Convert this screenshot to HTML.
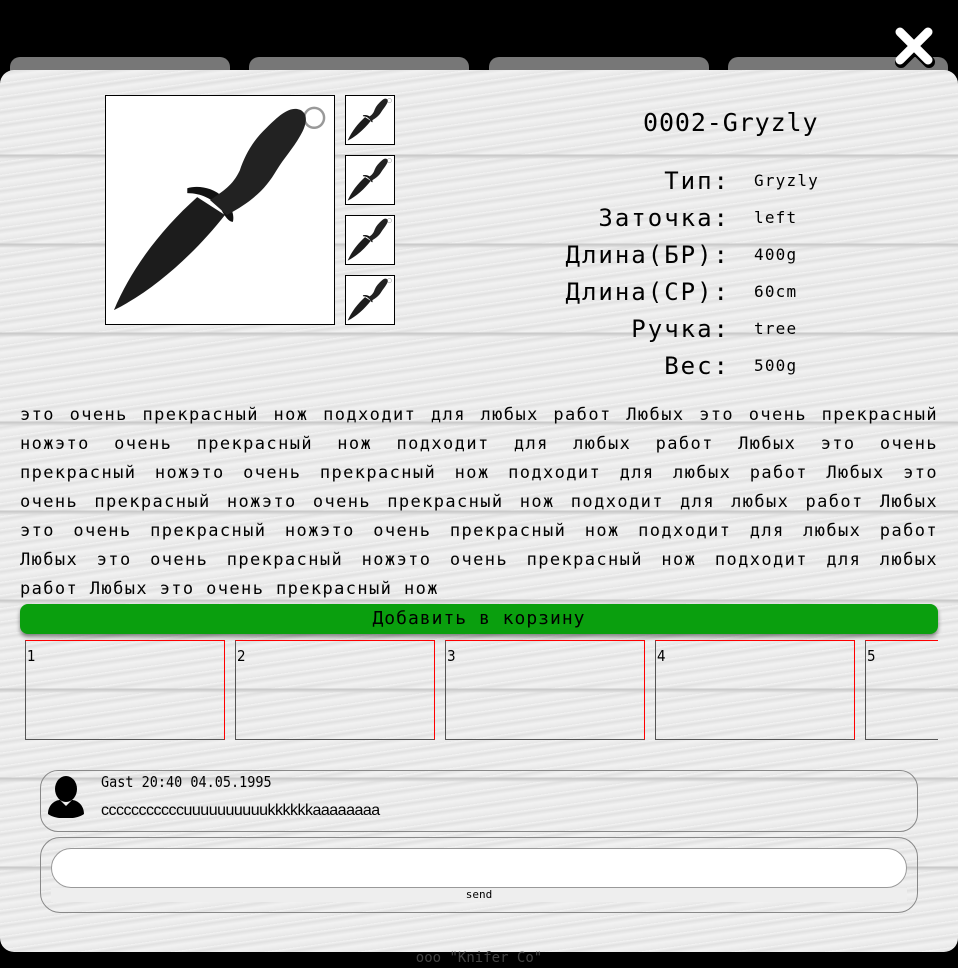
<!DOCTYPE html>
<html><head><meta charset="utf-8"><style>
*{box-sizing:border-box;margin:0;padding:0}
html,body{width:958px;height:968px;overflow:hidden;background:#000;font-family:"DejaVu Sans Mono","Liberation Mono",monospace;color:#000}
.tab{position:absolute;top:57px;height:30px;width:220px;background:#777;border-radius:10px}
.modal{position:absolute;left:0;top:70px;width:958px;height:882px;border-radius:14px;overflow:hidden;
background:#e9e9e9;
background-image:repeating-linear-gradient(180deg,transparent 0,transparent 84px,#c8c8c8 85px,#d6d6d6 87px,transparent 89px),
repeating-linear-gradient(172deg,rgba(255,255,255,.5) 0,rgba(200,200,200,.25) 3px,rgba(255,255,255,.4) 7px,rgba(225,225,225,.3) 13px)}
.close{position:absolute;left:890px;top:22px;width:48px;height:48px}
.main{position:absolute;left:105px;top:25px;width:230px;height:230px;background:#fff;border:1px solid #000}
.th{position:absolute;left:345px;width:50px;height:50px;background:#fff;border:1px solid #000}
.title{position:absolute;left:643px;top:38px;font-size:25px;letter-spacing:0.9px}
.specs{position:absolute;top:92px;left:400px;width:500px}
.row{height:37px;display:flex;align-items:center}
.lab{width:330px;text-align:right;font-size:24px;letter-spacing:2px}
.val{margin-left:24px;font-size:16px;letter-spacing:1.2px}
.desc{position:absolute;left:20px;top:331px;width:918px;font-size:17px;line-height:29px;text-align:justify;letter-spacing:1.4px}
.btn{position:absolute;left:20px;top:534px;width:918px;height:30px;background:#0a9f0e;border-radius:8px;text-align:center;font-size:18px;line-height:30px;box-shadow:0 3px 4px rgba(0,0,0,.45);letter-spacing:1px}
.scr{position:absolute;left:25px;top:570px;width:913px;height:100px;overflow:hidden}
.b{position:absolute;top:0;width:200px;height:100px;border:1px solid red;border-left-color:#555;border-bottom-color:#555;font-family:"DejaVu Sans Condensed","Liberation Sans Narrow",sans-serif;font-size:15px;padding-top:6px;padding-left:1px}
.com{position:absolute;left:40px;top:700px;width:878px;height:62px;border:1px solid #888;border-radius:18px}
.com .n{position:absolute;left:60px;top:2px;font-size:15px;font-family:"DejaVu Sans Mono",monospace;transform:scaleX(.9);transform-origin:left}
.com .m{position:absolute;left:60px;top:31px;font-size:16px;font-family:"Liberation Sans",sans-serif;letter-spacing:-.5px}
.frm{position:absolute;left:40px;top:767px;width:878px;height:76px;border:1px solid #888;border-radius:20px}
.ta{position:absolute;left:10px;top:10px;width:856px;height:40px;background:#fff;border:1px solid #999;border-radius:20px}
.send{position:absolute;left:10px;top:50px;width:856px;height:14px;background:#eee;font-size:11px;text-align:center;line-height:14px}
.foot{position:absolute;top:950px;left:0;width:958px;text-align:center;color:#444;font-size:14px}
</style></head><body>
<div class="tab" style="left:10px"></div><div class="tab" style="left:249px"></div><div class="tab" style="left:489px"></div><div class="tab" style="left:728px"></div>
<div class="modal">
<div class="main"><svg width="228" height="228" viewBox="0 0 230 230" id="k">
<circle cx="210" cy="22" r="10" fill="none" stroke="#999" stroke-width="2.5"/>
<path d="M8 216 C25 175 55 135 92 102 L120 120 C90 158 50 195 8 216Z" fill="#1c1c1c"/>
<path d="M82 93 C92 90 108 92 118 102 C126 110 130 120 128 127 C124 127 120 122 116 114 C108 104 96 98 82 98Z" fill="#111"/>
<path d="M105 105 C118 96 128 90 135 75 C140 60 148 45 162 32 C176 18 186 10 196 14 C204 18 203 28 196 40 C188 54 180 62 172 75 C162 92 150 105 122 120Z" fill="#222"/>
</svg></div>
<div class="th" style="top:25px"><svg width="48" height="48" viewBox="0 0 230 230"><use href="#k"/></svg></div>
<div class="th" style="top:85px"><svg width="48" height="48" viewBox="0 0 230 230"><use href="#k"/></svg></div>
<div class="th" style="top:145px"><svg width="48" height="48" viewBox="0 0 230 230"><use href="#k"/></svg></div>
<div class="th" style="top:205px"><svg width="48" height="48" viewBox="0 0 230 230"><use href="#k"/></svg></div>
<div class="title">0002-Gryzly</div>
<div class="specs">
<div class="row"><div class="lab">Тип:</div><div class="val">Gryzly</div></div>
<div class="row"><div class="lab">Заточка:</div><div class="val">left</div></div>
<div class="row"><div class="lab">Длина(БР):</div><div class="val">400g</div></div>
<div class="row"><div class="lab">Длина(СР):</div><div class="val">60cm</div></div>
<div class="row"><div class="lab">Ручка:</div><div class="val">tree</div></div>
<div class="row"><div class="lab">Вес:</div><div class="val">500g</div></div>
</div>
<div class="desc">это очень прекрасный нож подходит для любых работ Любых это очень прекрасный ножэто очень прекрасный нож подходит для любых работ Любых это очень прекрасный ножэто очень прекрасный нож подходит для любых работ Любых это очень прекрасный ножэто очень прекрасный нож подходит для любых работ Любых это очень прекрасный ножэто очень прекрасный нож подходит для любых работ Любых это очень прекрасный ножэто очень прекрасный нож подходит для любых работ Любых это очень прекрасный нож</div>
<div class="btn">Добавить в корзину</div>
<div class="scr">
<div class="b" style="left:0">1</div><div class="b" style="left:210px">2</div><div class="b" style="left:420px">3</div><div class="b" style="left:630px">4</div><div class="b" style="left:840px">5</div>
</div>
<div class="com">
<svg style="position:absolute;left:5px;top:5px" width="40" height="42" viewBox="0 0 40 42"><ellipse cx="20" cy="13" rx="11" ry="13" fill="#000"/><path d="M2 38 C2 28 10 24 14 24 L20 30 L26 24 C30 24 38 28 38 38 C30 44 10 44 2 38Z" fill="#000"/></svg>
<div class="n">Gast 20:40 04.05.1995</div>
<div class="m">cccccccccccuuuuuuuuuukkkkkkaaaaaaaa</div>
</div>
<div class="frm"><div class="ta"></div><div class="send">send</div></div>
</div>
<svg class="close" viewBox="0 0 48 48"><path d="M10 10 L38 38 M38 10 L10 38" stroke="#000" stroke-width="12" stroke-linecap="round" transform="translate(1,2)"/><path d="M10 10 L38 38 M38 10 L10 38" stroke="#fff" stroke-width="9" stroke-linecap="round"/></svg>
<div class="foot">ooo "Knifer Co"</div>
</body></html>
